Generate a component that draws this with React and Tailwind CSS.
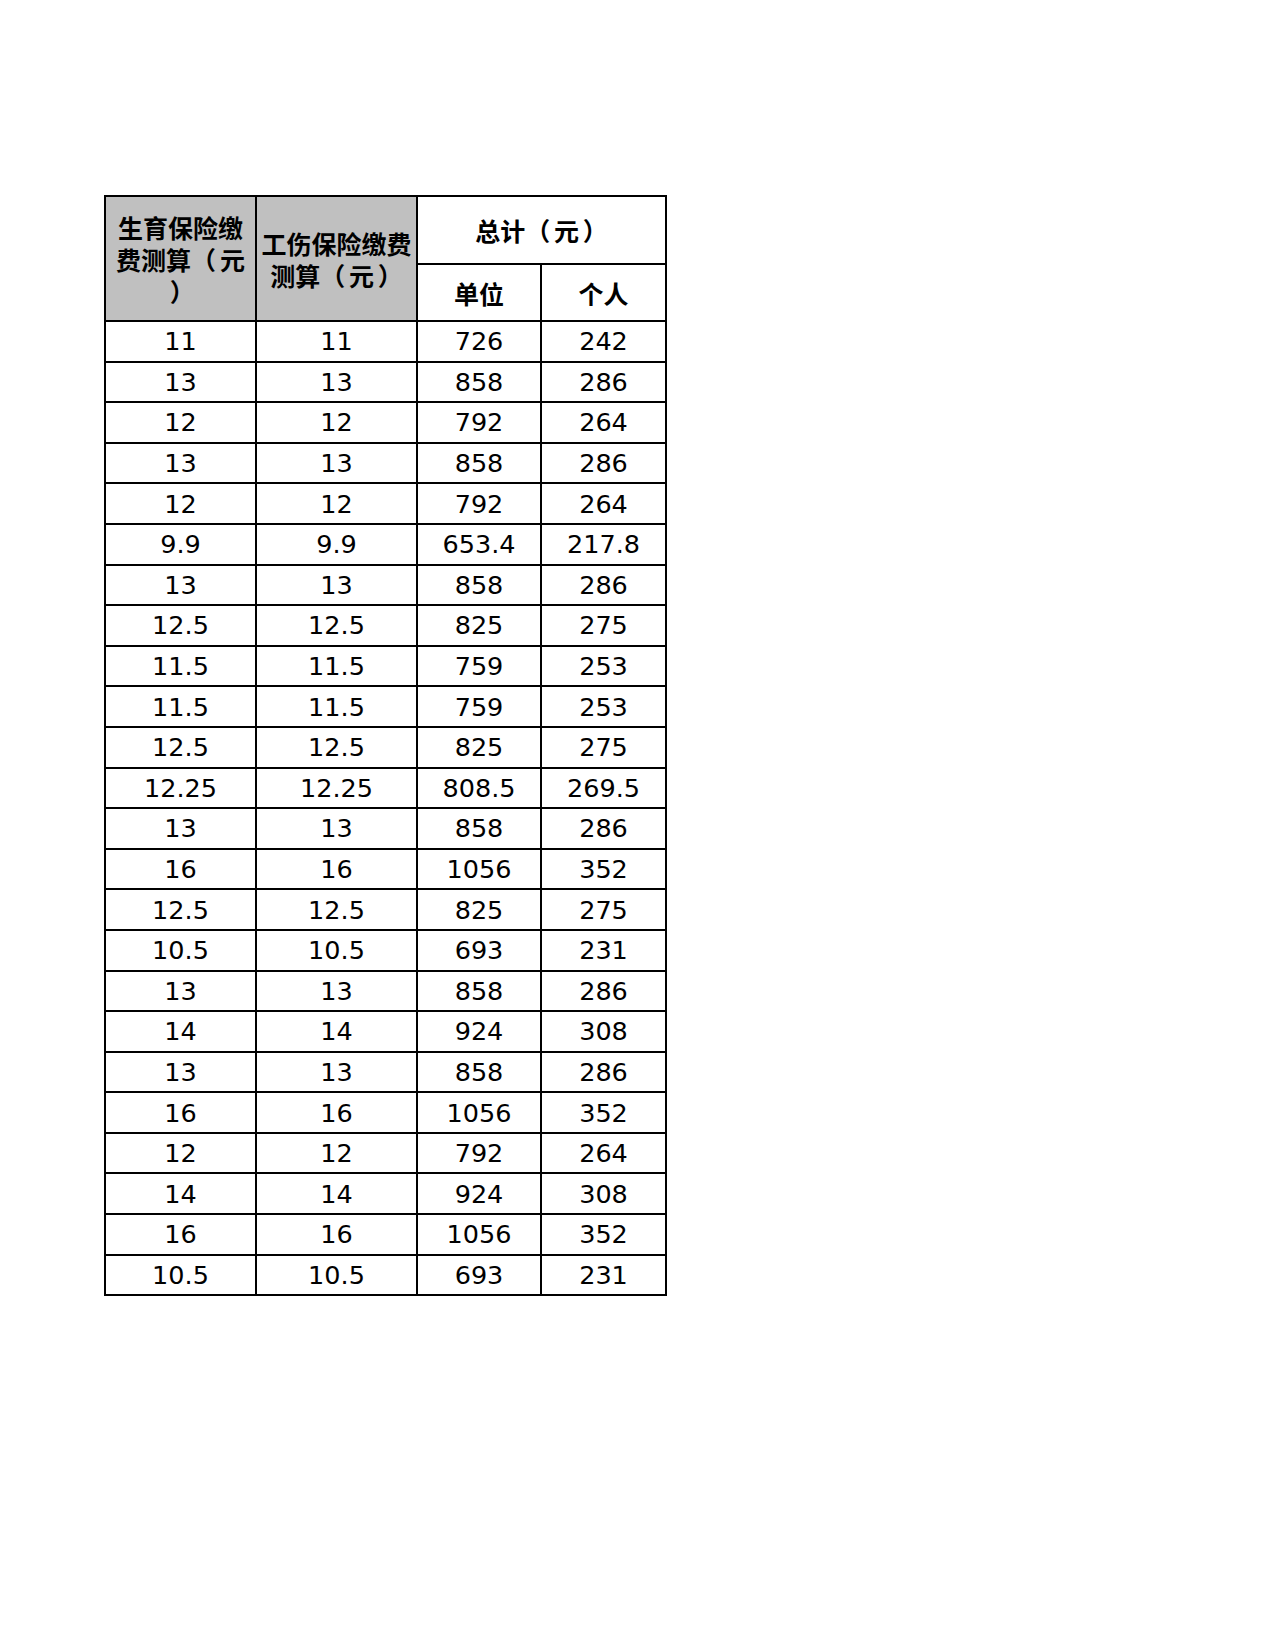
import React from "react";

const rows = [
  ["11", "11", "726", "242"],
  ["13", "13", "858", "286"],
  ["12", "12", "792", "264"],
  ["13", "13", "858", "286"],
  ["12", "12", "792", "264"],
  ["9.9", "9.9", "653.4", "217.8"],
  ["13", "13", "858", "286"],
  ["12.5", "12.5", "825", "275"],
  ["11.5", "11.5", "759", "253"],
  ["11.5", "11.5", "759", "253"],
  ["12.5", "12.5", "825", "275"],
  ["12.25", "12.25", "808.5", "269.5"],
  ["13", "13", "858", "286"],
  ["16", "16", "1056", "352"],
  ["12.5", "12.5", "825", "275"],
  ["10.5", "10.5", "693", "231"],
  ["13", "13", "858", "286"],
  ["14", "14", "924", "308"],
  ["13", "13", "858", "286"],
  ["16", "16", "1056", "352"],
  ["12", "12", "792", "264"],
  ["14", "14", "924", "308"],
  ["16", "16", "1056", "352"],
  ["10.5", "10.5", "693", "231"],
];

const cjk = { fontFamily: '"Noto Sans CJK SC", sans-serif' };

// full-width parens with a little more air on the inner side, like the sheet's font
const L = () => <span className="mr-[0.15em]">（</span>;
const R = () => <span className="ml-[0.15em]">）</span>;

function App() {
  return (
    <div className="w-[1275px] h-[1650px] bg-white pt-[195px] pl-[104px]">
      <table
        className="border-collapse text-black text-[25.5px]"
        style={{ fontFamily: '"DejaVu Sans", "Noto Sans CJK SC", sans-serif' }}
      >
        <colgroup>
          <col className="w-[151px]" />
          <col className="w-[161px]" />
          <col className="w-[124px]" />
          <col className="w-[125px]" />
        </colgroup>
        <thead className="text-[25px] leading-[32px]" style={cjk}>
          <tr className="h-[68px]">
            <th
              rowSpan={2}
              className="border-2 border-black bg-[#c0c0c0] p-0 text-center align-middle font-bold"
            >
              生育保险缴
              <br />
              费测算<L />元
              <br />
              <R />
            </th>
            <th
              rowSpan={2}
              className="border-2 border-black bg-[#c0c0c0] p-0 text-center align-middle font-bold"
            >
              工伤保险缴费
              <br />
              测算<L />元<R />
            </th>
            <th colSpan={2} className="border-2 border-black p-0 text-center align-middle font-bold">
              总计<L />元<R />
            </th>
          </tr>
          <tr className="h-[57px]">
            <th className="border-2 border-black p-0 text-center align-middle font-bold">单位</th>
            <th className="border-2 border-black p-0 text-center align-middle font-bold">个人</th>
          </tr>
        </thead>
        <tbody>
          {rows.map((r, i) => (
            <tr key={i} className="h-[40.6px]">
              {r.map((c, j) => (
                <td key={j} className="border-2 border-black text-center align-middle p-0 leading-[28px]">
                  {c}
                </td>
              ))}
            </tr>
          ))}
        </tbody>
      </table>
    </div>
  );
}

export default App;
